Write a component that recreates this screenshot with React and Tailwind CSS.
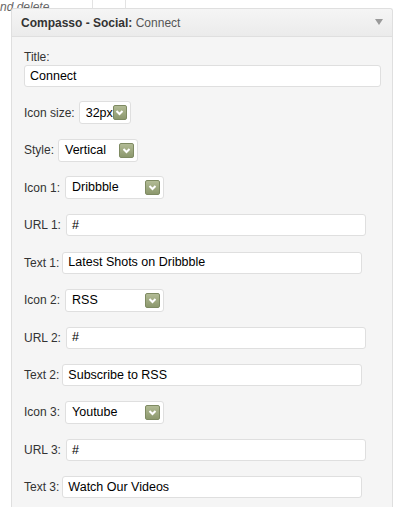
import React from 'react'

const rows = [
  { label: 'Icon size:', kind: 'select', value: '32px', w: 'w-[52px]', gap: 'gap-[4px]' },
  { label: 'Style:', kind: 'select', value: 'Vertical', w: 'w-[80px]', gap: 'gap-[4px]' },
  { label: 'Icon 1:', kind: 'select', value: 'Dribbble', w: 'w-[99px]', gap: 'gap-[5px]' },
  { label: 'URL 1:', kind: 'input', value: '#', gap: 'gap-[5px]' },
  { label: 'Text 1:', kind: 'input', value: 'Latest Shots on Dribbble', gap: 'gap-[3px]' },
  { label: 'Icon 2:', kind: 'select', value: 'RSS', w: 'w-[99px]', gap: 'gap-[5px]' },
  { label: 'URL 2:', kind: 'input', value: '#', gap: 'gap-[5px]' },
  { label: 'Text 2:', kind: 'input', value: 'Subscribe to RSS', gap: 'gap-[3px]' },
  { label: 'Icon 3:', kind: 'select', value: 'Youtube', w: 'w-[99px]', gap: 'gap-[5px]' },
  { label: 'URL 3:', kind: 'input', value: '#', gap: 'gap-[5px]' },
  { label: 'Text 3:', kind: 'input', value: 'Watch Our Videos', gap: 'gap-[3px]' },
]

function ArrowBox() {
  return (
    <span className="flex h-[15px] w-[15px] items-center justify-center rounded-[2px] border border-[#7e8a62] bg-gradient-to-b from-[#b2bb95] to-[#8c986d]">
      <svg width="11" height="11" viewBox="0 0 11 11">
        <polyline points="2.5,4 5.5,7 8.5,4" fill="none" stroke="#fff" strokeWidth="2" />
      </svg>
    </span>
  )
}

function Select({ value, w }) {
  return (
    <div className={`flex h-[23px] ${w} items-center justify-between rounded-[3px] border border-[#dfdfdf] bg-white pl-[6px] pr-[3px] text-[12.5px] text-black`}>
      <span>{value}</span>
      <ArrowBox />
    </div>
  )
}

function TextInput({ value, full }) {
  return (
    <div className={`flex h-[22px] ${full ? 'w-full' : 'w-[300px]'} items-center rounded-[3px] border border-[#dfdfdf] bg-white pl-[5px] text-[12.5px] text-black`}>
      {value}
    </div>
  )
}

export default function App() {
  return (
    <div className="relative h-[507px] w-[401px] overflow-hidden bg-white font-['Liberation_Sans',Arial,sans-serif]">
      {/* page behind the widget */}
      <span className="absolute left-0 top-0 text-[12px] italic leading-[14px] text-[#666]">nd delete</span>
      <span className="absolute left-[92px] top-0 h-[8px] w-px bg-[#e3e3e3]" />
      <span className="absolute left-[125px] top-0 h-[8px] w-px bg-[#e3e3e3]" />

      <div className="relative ml-[11px] mt-[8px] w-[382px] rounded-t-[3px] border border-b-0 border-[#dfdfdf] bg-[#f5f5f5]">
        <div className="flex h-[28px] items-center justify-between rounded-t-[3px] border-b border-[#dfdfdf] bg-gradient-to-b from-[#f5f5f5] to-[#ebebeb] pl-[9px] pr-[9px] text-[12px]">
          <span className="text-[#333]">
            <b>Compasso - Social:</b> <span className="text-[#555]">Connect</span>
          </span>
          <svg width="8" height="7" viewBox="0 0 8 7">
            <polygon points="0,0 8,0 4,6" fill="#9a9a9a" />
          </svg>
        </div>

        <div className="flex flex-col gap-[14.45px] pb-[20px] pl-[12px] pr-[11px] pt-[13px] text-[12px] text-[#333]">
          <div className="flex flex-col gap-[1px]">
            <label className="leading-[14px]">Title:</label>
            <TextInput value="Connect" full />
          </div>
          {rows.map((r) => (
            <div key={r.label} className={`flex h-[23px] items-center ${r.gap}`}>
              <label>{r.label}</label>
              {r.kind === 'select' ? <Select value={r.value} w={r.w} /> : <TextInput value={r.value} />}
            </div>
          ))}
        </div>
      </div>
    </div>
  )
}
